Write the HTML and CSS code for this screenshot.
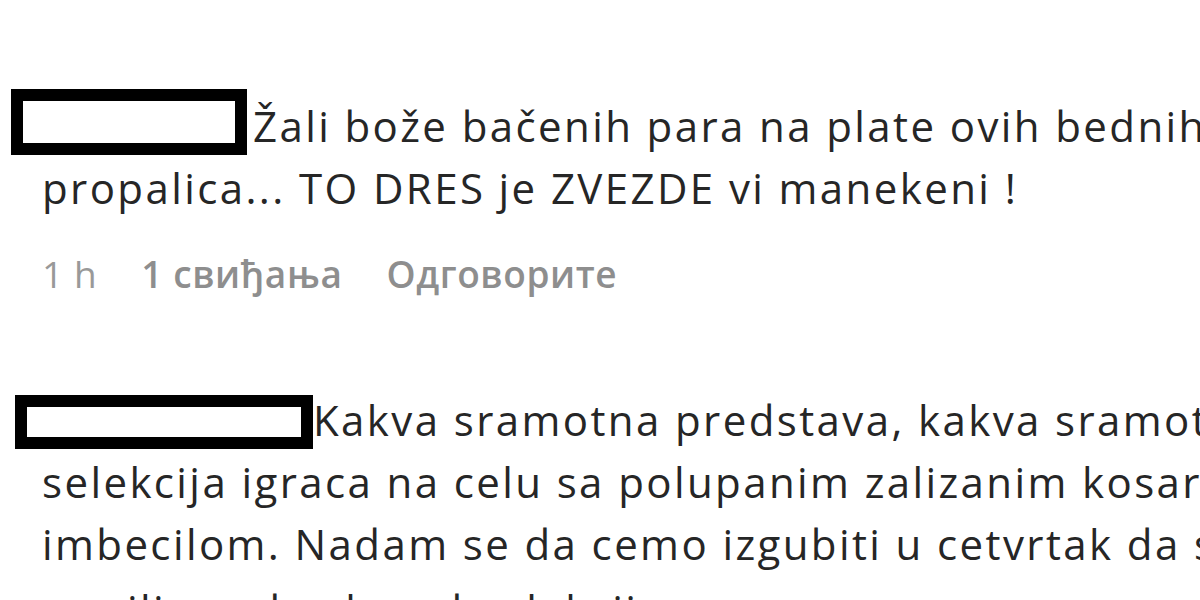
FILE: index.html
```html
<!DOCTYPE html>
<html lang="sr">
<head>
<meta charset="utf-8">
<title>Komentari</title>
<link rel="stylesheet" href="styles.css">
</head>
<body>
<main class="thread">
  <section class="comment comment-first">
    <div class="text">
      <div class="line"><span class="redact redact-a"></span>Žali bože bačenih para na plate ovih bednih propalica</div>
      <div class="line">propalica... TO DRES je ZVEZDE vi manekeni !</div>
    </div>
    <div class="meta">
      <span class="time">1 h</span>
      <span class="likes">1 свиђања</span>
      <span class="reply">Одговорите</span>
    </div>
  </section>
  <section class="comment comment-second">
    <div class="text">
      <div class="line"><span class="redact redact-b"></span>Kakva sramotna predstava, kakva sramotna</div>
      <div class="line">selekcija igraca na celu sa polupanim zalizanim kosarkaskim</div>
      <div class="line">imbecilom. Nadam se da cemo izgubiti u cetvrtak da se</div>
      <div class="line line-last">sve ili ova bruka od selekcije nema sanse za nas</div>
    </div>
  </section>
</main>
</body>
</html>
```

FILE: styles.css
```css
html, body {
  margin: 0;
  padding: 0;
  background: #ffffff;
  overflow: hidden;
  width: 1200px;
  height: 600px;
}

.thread {
  display: flex;
  flex-direction: column;
  padding-top: 95px;
  font-family: "Open Sans", "Noto Sans", sans-serif;
}

.comment {
  display: flex;
  flex-direction: column;
  padding-left: 42px;
}

.comment-second {
  margin-top: 95px;
}

.text {
  font-size: 42px;
  line-height: 62px;
  letter-spacing: 2.4px;
  color: #262626;
  white-space: nowrap;
}

.line {
  white-space: nowrap;
}

.line-last {
  padding-top: 4px;
}

.redact {
  display: inline-block;
  box-sizing: border-box;
  border: 12px solid #000;
  background: #fff;
  vertical-align: -13px;
  margin-top: -30px;
}

.redact-a {
  width: 236px;
  height: 66px;
  margin-left: -31px;
  margin-right: 6px;
}

.redact-b {
  width: 298px;
  height: 54px;
  margin-left: -27px;
  margin-right: 0;
}

.meta {
  display: flex;
  gap: 44px;
  margin-top: 35px;
  font-size: 37px;
  line-height: 40px;
  letter-spacing: 0.6px;
  color: #8e8e8e;
  white-space: nowrap;
}

.time {
  color: #999999;
}

.likes, .reply {
  font-weight: 600;
}
```
